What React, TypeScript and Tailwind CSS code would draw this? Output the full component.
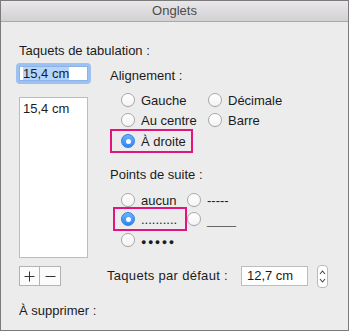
import React from "react";

function Radio({ checked = false }: { checked?: boolean }) {
  if (checked) {
    return (
      <span className="flex h-[14px] w-[14px] shrink-0 items-center justify-center rounded-full border border-[#2f7fe6] bg-gradient-to-b from-[#6cb3fa] to-[#2a84f6]">
        <span className="h-[5px] w-[5px] rounded-full bg-white" />
      </span>
    );
  }
  return (
    <span className="h-[14px] w-[14px] shrink-0 rounded-full border border-[#a9a9a9] bg-gradient-to-b from-white to-[#f4f4f4] shadow-[0_0.5px_0.5px_rgba(0,0,0,0.08)]" />
  );
}

function Opt({ label, checked = false, w }: { label: React.ReactNode; checked?: boolean; w: string }) {
  return (
    <div className={`flex h-[20px] items-center gap-[6px] ${w}`}>
      <Radio checked={checked} />
      <span className="leading-none">{label}</span>
    </div>
  );
}

export default function App() {
  return (
    <div
      className="flex h-[331px] w-[349px] flex-col border border-[#7b7b7b] bg-[#ececec] text-[13px] text-[#1b1b1b]"
      style={{ fontFamily: '"Liberation Sans", Arial, sans-serif' }}
    >
      <div className="flex h-[21px] shrink-0 items-center justify-center border-b border-[#a9a9a9] bg-gradient-to-b from-[#e9e7e9] to-[#d3d1d3] text-[13px] text-[#4b4b4b]">
        Onglets
      </div>
      <div className="flex flex-col pl-[18px] pr-[18px]">
        <div className="mt-[21px] h-[16px] leading-[16px]">Taquets de tabulation :</div>
        <div className="mt-[4px] flex">
          {/* left column */}
          <div className="flex w-[69px] flex-col">
            <div className="-ml-[3px] h-[21px] w-[75px] rounded-[4px] border-[3px] border-[#9dc1f1]">
              <div className="flex h-full w-full items-center border border-[#8ab1e8] bg-white pl-[3px]">
                <span className="bg-[#b4d6fe] leading-[13px]">15,4 cm</span>
              </div>
            </div>
            <div className="mt-[13px] h-[161px] border border-[#bcbcbc] bg-white pl-[3px] pt-[3px] leading-[16px]">
              15,4 cm
            </div>
          </div>
          {/* right column */}
          <div className="ml-[22px] flex flex-col pt-[5px]">
            <div className="h-[16px] leading-[16px]">Alignement :</div>
            <div className="mt-[6px] flex pl-[11px]">
              <Opt label="Gauche" w="w-[87px]" />
              <Opt label="Décimale" w="w-[90px]" />
            </div>
            <div className="flex pl-[11px]">
              <Opt label="Au centre" w="w-[87px]" />
              <Opt label="Barre" w="w-[90px]" />
            </div>
            <div className="-mt-[1px] flex h-[24px] w-[83px] items-center border-2 border-[#e2157f] pl-[9px]">
              <Opt label="À droite" checked w="w-auto" />
            </div>
            <div className="mt-[14px] h-[16px] leading-[16px]">Points de suite :</div>
            <div className="mt-[7px] flex pl-[11px]">
              <Opt label="aucun" w="w-[66px]" />
              <Opt label="-----" w="w-[60px]" />
            </div>
            <div className="-mt-[3px] flex items-center">
              <div className="ml-[3px] flex h-[24px] w-[74px] items-center border-2 border-[#e2157f] pl-[6px]">
                <Opt label=".........." checked w="w-auto" />
              </div>
              <div>
                <Opt label={<span className="text-[#555]">____</span>} w="w-[60px]" />
              </div>
            </div>
            <div className="-mt-[1px] flex pl-[11px]">
              <Opt label={<span className="text-[9px] tracking-[1.5px]">●●●●●</span>} w="w-[66px]" />
            </div>
          </div>
        </div>
        {/* bottom row */}
        <div className="mt-[8px] flex h-[20px] items-center">
          <div className="flex h-[20px] w-[42px] border border-[#b3b3b3] bg-[#fbfbfb]">
            <div className="flex w-[20px] items-center justify-center border-r border-[#b3b3b3]">
              <svg width="11" height="11" viewBox="0 0 11 11"><path d="M5.5 0.5v10M0.5 5.5h10" stroke="#333" strokeWidth="1" /></svg>
            </div>
            <div className="flex flex-1 items-center justify-center">
              <svg width="11" height="11" viewBox="0 0 11 11"><path d="M0.5 5.5h10" stroke="#333" strokeWidth="1" /></svg>
            </div>
          </div>
          <div className="ml-[46px] leading-[16px] tracking-[0.3px]">Taquets par défaut :</div>
          <div className="ml-[13px] flex h-[20px] w-[67px] items-center border border-[#bdbdbd] bg-white pl-[5px]">
            12,7 cm
          </div>
          <div className="ml-[9px] flex h-[23px] w-[11px] flex-col items-center justify-center gap-[3px] rounded-[4px] border border-[#b9b9b9] bg-white">
            <svg width="7" height="5" viewBox="0 0 7 5"><path d="M1 4l2.5-3 2.5 3" fill="none" stroke="#444" strokeWidth="1.1" /></svg>
            <svg width="7" height="5" viewBox="0 0 7 5"><path d="M1 1l2.5 3 2.5-3" fill="none" stroke="#444" strokeWidth="1.1" /></svg>
          </div>
        </div>
        <div className="mt-[17px] h-[16px] leading-[16px]">À supprimer :</div>
      </div>
    </div>
  );
}
